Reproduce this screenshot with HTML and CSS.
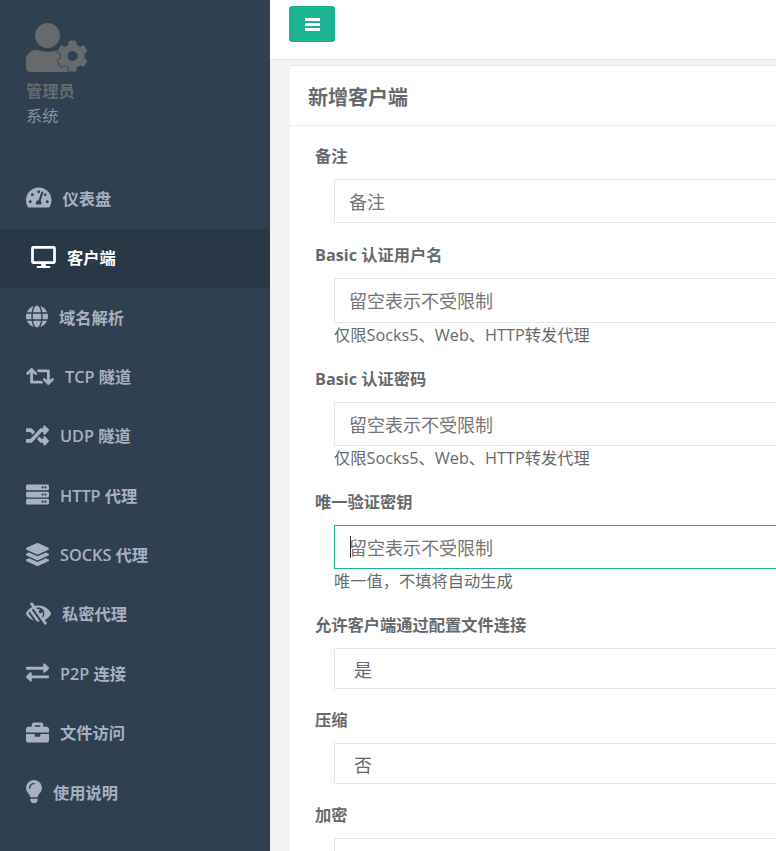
FILE: index.html
```html
<!DOCTYPE html>
<html lang="zh-CN">
<head>
<meta charset="utf-8">
<title>新增客户端</title>
<link rel="stylesheet" href="styles.css">
</head>
<body>
<div class="app">
  <aside class="sidebar">
    <div class="profile">
      <svg class="avatar" viewBox="0 0 62 49" aria-hidden="true">
        <circle cx="21.5" cy="12.5" r="12.5"/>
        <path d="M10 27h2.500c5.500 2.400 13.500 2.400 19 0H35c2 0 4 .5 5.500 1.200L48 49H5c-3 0-5-2-5-5v-7c0-5.500 4.500-10 10-10z"/>
        <svg class="avatar-gear" x="30.500" y="17" width="32" height="32" viewBox="0 0 512 512"><path d="M487.400 315.700l-42.600-24.600c4.300-23.200 4.300-47 0-70.200l42.600-24.600c4.900-2.800 7.100-8.600 5.500-14-11.100-35.600-30-67.800-54.700-94.600-3.800-4.100-10-5.100-14.800-2.300L380.800 110c-17.900-15.400-38.500-27.300-60.800-35.100V25.800c0-5.600-3.900-10.500-9.400-11.700-36.700-8.200-74.300-7.800-109.200 0-5.500 1.200-9.400 6.100-9.400 11.700V75c-22.200 7.900-42.800 19.800-60.800 35.100L88.700 85.500c-4.900-2.800-11-1.900-14.800 2.300-24.700 26.700-43.600 58.900-54.700 94.600-1.700 5.400.6 11.200 5.500 14L67.300 221c-4.300 23.200-4.300 47 0 70.200l-42.600 24.600c-4.900 2.800-7.100 8.600-5.500 14 11.100 35.600 30 67.800 54.700 94.600 3.800 4.100 10 5.100 14.800 2.300l42.600-24.600c17.900 15.400 38.500 27.300 60.800 35.100v49.200c0 5.600 3.900 10.500 9.400 11.700 36.700 8.200 74.300 7.800 109.200 0 5.500-1.200 9.400-6.100 9.400-11.700v-49.200c22.200-7.900 42.800-19.800 60.800-35.100l42.600 24.600c4.900 2.800 11 1.900 14.800-2.300 24.700-26.700 43.600-58.900 54.700-94.600 1.500-5.500-.7-11.300-5.600-14.100zM256 336c-44.100 0-80-35.900-80-80s35.900-80 80-80 80 35.900 80 80-35.900 80-80 80z"/></svg>
      </svg>
      <div class="profile-name">管理员</div>
      <div class="profile-role">系统</div>
    </div>
    <nav class="nav">
      <a class="nav-item">
        <svg class="icon" viewBox="0 0 576 512" width="25.500" height="23"><path d="M288 32C128.940 32 0 160.940 0 320c0 52.800 14.250 102.260 39.060 144.800 5.610 9.620 16.300 15.200 27.440 15.200h443c11.140 0 21.830-5.580 27.440-15.200C561.750 422.260 576 372.800 576 320c0-159.060-128.940-288-288-288zm0 64c14.710 0 26.580 10.130 30.320 23.650-1.110 2.260-2.640 4.230-3.450 6.670l-9.220 27.670c-5.130 3.490-10.970 6.010-17.640 6.010-17.670 0-32-14.330-32-32S270.330 96 288 96zM96 384c-17.670 0-32-14.330-32-32s14.330-32 32-32 32 14.330 32 32-14.330 32-32 32zm48-160c-17.670 0-32-14.330-32-32s14.330-32 32-32 32 14.330 32 32-14.330 32-32 32zm246.770-72.410l-61.330 184C343.130 347.330 352 364.540 352 384c0 11.720-3.380 22.550-8.880 32H232.880c-5.500-9.450-8.880-20.280-8.880-32 0-33.940 26.500-61.430 59.900-63.590l61.340-184.010c4.170-12.560 17.730-19.450 30.360-15.170 12.570 4.190 19.350 17.790 15.170 30.360zm14.660 57.200l15.520-46.550c3.470-1.290 7.130-2.230 11.050-2.230 17.670 0 32 14.330 32 32s-14.330 32-32 32c-11.380-.01-20.890-6.270-26.570-15.220zM480 384c-17.670 0-32-14.330-32-32s14.330-32 32-32 32 14.330 32 32-14.330 32-32 32z"/></svg>
        <span>仪表盘</span>
      </a>
      <a class="nav-item is-active">
        <svg class="icon" viewBox="0 0 576 512" width="25" height="22"><path d="M528 0H48C21.500 0 0 21.500 0 48v320c0 26.500 21.500 48 48 48h192l-16 48h-72c-13.300 0-24 10.700-24 24s10.700 24 24 24h272c13.300 0 24-10.700 24-24s-10.700-24-24-24h-72l-16-48h192c26.500 0 48-21.500 48-48V48c0-26.500-21.500-48-48-48zm-16 352H64V64h448v288z"/></svg>
        <span>客户端</span>
      </a>
      <a class="nav-item">
        <svg class="icon" viewBox="0 0 496 512" width="22" height="23"><path d="M336.500 160C322 70.700 287.800 8 248 8s-74 62.700-88.500 152h177zM152 256c0 22.200 1.200 43.500 3.300 64h185.300c2.100-20.500 3.300-41.800 3.300-64s-1.200-43.500-3.300-64H155.300c-2.100 20.500-3.300 41.800-3.300 64zm324.700-96c-28.600-67.900-86.500-120.400-158-141.600 24.400 33.800 41.200 84.700 50 141.600h108zM177.200 18.400C105.800 39.600 47.800 92.100 19.300 160h108c8.700-56.900 25.500-107.800 49.900-141.600zM487.400 192H372.700c2.100 21 3.300 42.500 3.300 64s-1.200 43-3.300 64h114.600c5.500-20.500 8.600-41.800 8.600-64s-3.100-43.500-8.500-64zM120 256c0-21.500 1.200-43 3.300-64H8.600C3.200 212.500 0 233.800 0 256s3.200 43.500 8.600 64h114.600c-2-21-3.200-42.500-3.200-64zm39.500 96c14.500 89.300 48.700 152 88.500 152s74-62.700 88.500-152h-177zm159.300 141.600c71.400-21.200 129.400-73.700 158-141.600h-108c-8.800 56.900-25.600 107.800-50 141.600zM19.300 352c28.600 67.900 86.500 120.400 158 141.600-24.400-33.800-41.200-84.700-50-141.600h-108z"/></svg>
        <span>域名解析</span>
      </a>
      <a class="nav-item">
        <svg class="icon" viewBox="0 0 640 512" width="28" height="23"><path d="M629.657 343.598L528.971 444.284c-9.373 9.372-24.568 9.372-33.941 0L394.343 343.598c-9.373-9.373-9.373-24.569 0-33.941l10.823-10.823c9.562-9.562 25.133-9.340 34.419.492L480 342.118V160H292.451a24.005 24.005 0 0 1-16.971-7.029l-16-16C244.361 121.851 255.069 96 276.451 96H520c13.255 0 24 10.745 24 24v222.118l40.416-42.792c9.285-9.831 24.856-10.054 34.419-.492l10.823 10.823c9.372 9.372 9.372 24.569-.001 33.941zm-265.138 15.431A23.999 23.999 0 0 0 347.548 352H160V169.881l40.416 42.792c9.286 9.831 24.856 10.054 34.419.491l10.822-10.822c9.373-9.373 9.373-24.569 0-33.941L144.971 67.716c-9.373-9.373-24.569-9.373-33.941 0L10.343 168.402c-9.373 9.373-9.373 24.569 0 33.941l10.822 10.822c9.562 9.562 25.133 9.340 34.419-.491L96 169.881V392c0 13.255 10.745 24 24 24h243.549c21.382 0 32.090-25.851 16.971-40.971l-16.001-16z"/></svg>
        <span>TCP 隧道</span>
      </a>
      <a class="nav-item">
        <svg class="icon" viewBox="0 0 512 512" width="23" height="23"><path d="M504.971 359.029c9.373 9.373 9.373 24.569 0 33.941l-80 79.984c-15.010 15.010-40.971 4.490-40.971-16.971V416h-58.785a12.004 12.004 0 0 1-8.773-3.812l-70.556-75.596 53.333-57.143L352 336h32v-39.981c0-21.438 25.943-31.998 40.971-16.971l80 79.981zM12 176h84l52.781 56.551 53.333-57.143-70.556-75.596A11.999 11.999 0 0 0 122.785 96H12c-6.627 0-12 5.373-12 12v56c0 6.627 5.373 12 12 12zm372 0v39.984c0 21.460 25.961 31.980 40.971 16.971l80-79.984c9.373-9.373 9.373-24.569 0-33.941l-80-79.981C409.943 24.021 384 34.582 384 56.019V96h-58.785a12.004 12.004 0 0 0-8.773 3.812L96 336H12c-6.627 0-12 5.373-12 12v56c0 6.627 5.373 12 12 12h110.785c3.326 0 6.503-1.381 8.773-3.812L352 176h32z"/></svg>
        <span>UDP 隧道</span>
      </a>
      <a class="nav-item">
        <svg class="icon" viewBox="0 0 512 512" width="23" height="23"><path d="M480 160H32c-17.673 0-32-14.327-32-32V64c0-17.673 14.327-32 32-32h448c17.673 0 32 14.327 32 32v64c0 17.673-14.327 32-32 32zm-48-88c-13.255 0-24 10.745-24 24s10.745 24 24 24 24-10.745 24-24-10.745-24-24-24zm-64 0c-13.255 0-24 10.745-24 24s10.745 24 24 24 24-10.745 24-24-10.745-24-24-24zm112 248H32c-17.673 0-32-14.327-32-32v-64c0-17.673 14.327-32 32-32h448c17.673 0 32 14.327 32 32v64c0 17.673-14.327 32-32 32zm-48-88c-13.255 0-24 10.745-24 24s10.745 24 24 24 24-10.745 24-24-10.745-24-24-24zm-64 0c-13.255 0-24 10.745-24 24s10.745 24 24 24 24-10.745 24-24-10.745-24-24-24zm112 248H32c-17.673 0-32-14.327-32-32v-64c0-17.673 14.327-32 32-32h448c17.673 0 32 14.327 32 32v64c0 17.673-14.327 32-32 32zm-48-88c-13.255 0-24 10.745-24 24s10.745 24 24 24 24-10.745 24-24-10.745-24-24-24zm-64 0c-13.255 0-24 10.745-24 24s10.745 24 24 24 24-10.745 24-24-10.745-24-24-24z"/></svg>
        <span>HTTP 代理</span>
      </a>
      <a class="nav-item">
        <svg class="icon" viewBox="0 0 512 512" width="23" height="23"><path d="M12.410 148.020l232.940 105.670c6.800 3.090 14.490 3.090 21.290 0l232.940-105.670c16.550-7.510 16.550-32.520 0-40.030L266.650 2.310a25.607 25.607 0 0 0-21.290 0L12.410 107.980c-16.550 7.510-16.550 32.530 0 40.040zm487.180 88.280l-58.090-26.330-161.640 73.270c-7.560 3.430-15.590 5.170-23.860 5.170s-16.290-1.740-23.860-5.170L70.510 209.970l-58.100 26.330c-16.550 7.500-16.550 32.500 0 40l232.940 105.590c6.800 3.080 14.490 3.080 21.290 0L499.590 276.300c16.550-7.500 16.550-32.500 0-40zm0 127.800l-57.870-26.230-161.860 73.370c-7.560 3.430-15.590 5.170-23.860 5.170s-16.290-1.740-23.860-5.170L70.290 337.870 12.410 364.100c-16.550 7.500-16.550 32.500 0 40l232.940 105.590c6.800 3.080 14.490 3.080 21.290 0L499.590 404.100c16.550-7.500 16.550-32.500 0-40z"/></svg>
        <span>SOCKS 代理</span>
      </a>
      <a class="nav-item">
        <svg class="icon" viewBox="0 0 576 512" width="25" height="23"><path d="M569.344 231.631C512.960 135.949 407.810 72 288 72c-28.468 0-56.102 3.619-82.451 10.409L152.778 10.240c-7.601-10.858-22.564-13.500-33.423-5.900l-13.114 9.178c-10.860 7.601-13.502 22.566-5.900 33.426l43.131 58.395C89.449 131.730 40.228 174.683 6.682 231.581c-.01.017-.023.033-.034.05-8.765 14.875-8.964 33.528 0 48.739 38.500 65.332 99.742 115.862 172.859 141.349L55.316 244.302A272.194 272.194 0 0 1 83.610 208.390l119.400 170.580h.01l40.630 58.040a330.055 330.055 0 0 0 78.940 1.170l-189.980-271.400a277.628 277.628 0 0 1 38.777-21.563l251.232 356.980c7.601 10.860 22.565 13.502 33.425 5.900l13.114-9.178c10.860-7.601 13.502-22.566 5.900-33.426l-43.120-58.377-.007-.01c57.161-27.978 104.835-72.040 136.810-126.301a47.938 47.938 0 0 0 .001-48.739zM390.026 345.940l-19.066-27.230c24.682-32.567 27.711-76.353 8.800-111.680v.03c0 23.650-19.170 42.820-42.820 42.820-23.828 0-42.820-19.349-42.820-42.820 0-23.650 19.170-42.820 42.820-42.820h.03c-24.750-13.249-53.522-15.643-79.510-7.680l-19.068-27.237C253.758 123.306 270.488 120 288 120c75.162 0 136 60.826 136 136 0 34.504-12.833 65.975-33.974 89.940z"/></svg>
        <span>私密代理</span>
      </a>
      <a class="nav-item">
        <svg class="icon" viewBox="0 0 512 512" width="23" height="23"><path d="M0 168v-16c0-13.255 10.745-24 24-24h360V80c0-21.367 25.899-32.042 40.971-16.971l80 80c9.372 9.373 9.372 24.569 0 33.941l-80 80C409.956 271.982 384 261.456 384 240v-48H24c-13.255 0-24-10.745-24-24zm488 152H128v-48c0-21.314-25.862-32.080-40.971-16.971l-80 80c-9.372 9.373-9.372 24.569 0 33.941l80 80C102.057 463.997 128 453.437 128 432v-48h360c13.255 0 24-10.745 24-24v-16c0-13.255-10.745-24-24-24z"/></svg>
        <span>P2P 连接</span>
      </a>
      <a class="nav-item">
        <svg class="icon" viewBox="0 0 512 512" width="23" height="23"><path d="M320 336c0 8.840-7.160 16-16 16h-96c-8.840 0-16-7.160-16-16v-48H0v144c0 25.600 22.400 48 48 48h416c25.600 0 48-22.400 48-48V288H320v48zm144-208h-80V80c0-25.600-22.400-48-48-48H176c-25.600 0-48 22.400-48 48v48H48c-25.600 0-48 22.400-48 48v80h512v-80c0-25.600-22.400-48-48-48zm-144 0H192V96h128v32z"/></svg>
        <span>文件访问</span>
      </a>
      <a class="nav-item">
        <svg class="icon" viewBox="0 0 352 512" width="16" height="23"><path d="M96.060 454.350c.01 6.290 1.870 12.450 5.360 17.690l17.090 25.690a31.990 31.990 0 0 0 26.640 14.280h61.710a31.990 31.990 0 0 0 26.640-14.280l17.090-25.690a31.989 31.989 0 0 0 5.360-17.690l.04-38.350H96.010l.05 38.350zM0 176c0 44.370 16.450 84.850 43.560 115.780 16.520 18.850 42.360 58.230 52.210 91.450.04.26.07.52.11.78h160.240c.04-.26.07-.51.11-.78 9.850-33.220 35.690-72.600 52.210-91.450C335.550 260.850 352 220.370 352 176 352 78.610 272.910-.3 175.450 0 73.440.31 0 82.970 0 176zm176-80c-44.110 0-80 35.890-80 80 0 8.840-7.160 16-16 16s-16-7.160-16-16c0-61.760 50.240-112 112-112 8.840 0 16 7.160 16 16s-7.160 16-16 16z"/></svg>
        <span>使用说明</span>
      </a>
    </nav>
  </aside>
  <main class="main">
    <header class="topbar">
      <button class="menu-btn" type="button" aria-label="菜单">
        <svg viewBox="0 0 15 13" width="15" height="13"><rect y="0" width="15" height="3" rx=".5"/><rect y="5" width="15" height="3" rx=".5"/><rect y="10" width="15" height="3" rx=".5"/></svg>
      </button>
    </header>
    <div class="content">
      <section class="card">
        <h1 class="card-title">新增客户端</h1>
        <form class="card-body">
          <div class="field">
            <label class="field-label">备注</label>
            <div class="control"><input class="input" type="text" placeholder="备注"></div>
          </div>
          <div class="field">
            <label class="field-label">Basic 认证用户名</label>
            <div class="control"><input class="input" type="text" placeholder="留空表示不受限制"><div class="help">仅限Socks5、Web、HTTP转发代理</div></div>
          </div>
          <div class="field">
            <label class="field-label">Basic 认证密码</label>
            <div class="control"><input class="input" type="text" placeholder="留空表示不受限制"><div class="help">仅限Socks5、Web、HTTP转发代理</div></div>
          </div>
          <div class="field">
            <label class="field-label">唯一验证密钥</label>
            <div class="control"><input class="input is-focus" type="text" placeholder="留空表示不受限制"><span class="caret"></span><div class="help">唯一值，不填将自动生成</div></div>
          </div>
          <div class="field">
            <label class="field-label">允许客户端通过配置文件连接</label>
            <div class="control"><select class="select"><option>是</option><option>否</option></select></div>
          </div>
          <div class="field">
            <label class="field-label">压缩</label>
            <div class="control"><select class="select"><option>否</option><option>是</option></select></div>
          </div>
          <div class="field">
            <label class="field-label">加密</label>
            <div class="control"><select class="select"><option>否</option><option>是</option></select></div>
          </div>
        </form>
      </section>
    </div>
  </main>
</div>
</body>
</html>
```
FILE: styles.css
```css
* { box-sizing: border-box; }
html, body { margin: 0; height: 100%; overflow: hidden; }
body {
  font-family: "Open Sans", "Noto Sans CJK SC", sans-serif;
  font-size: 16.250px;
  color: #676a6c;
  background: #f3f3f4;
}
.app { display: flex; width: 1300px; height: 851px; overflow: hidden; }

.sidebar { flex: 0 0 270px; background: #2f4050; }
.profile { padding: 23px 0 0 26px; height: 169.300px; }
.avatar { display: block; width: 62px; height: 49px; fill: #676a6c; overflow: visible; }
.avatar-gear { stroke: #2f4050; }
.avatar-gear path { stroke: #2f4050; stroke-width: 26px; paint-order: stroke; }
.profile-name { margin-top: 7px; line-height: 24px; font-weight: 700; color: #676a6c; }
.profile-role { line-height: 26px; color: #8095a8; }

.nav { display: flex; flex-direction: column; }
.nav-item {
  display: flex;
  align-items: center;
  gap: 11px;
  height: 59.360px;
  padding-left: 26px;
  padding-bottom: 2px;
  font-weight: 600;
  color: #a7b1c2;
}
.nav-item .icon { display: block; flex: none; fill: currentColor; }
.nav-item.is-active { padding-left: 31px; background: #293846; color: #fff; }

.main { flex: 1; min-width: 0; }
.topbar { height: 60px; background: #fff; border-bottom: 1px solid #e7eaec; padding: 6px 0 0 19px; }
.menu-btn {
  display: flex;
  align-items: center;
  justify-content: center;
  width: 46px;
  height: 36px;
  padding: 0;
  border: 0;
  border-radius: 3px;
  background: #1ab394;
}
.menu-btn svg { fill: #fff; display: block; }

.content { padding: 5px 0 0 20px; }
.card { background: #fff; border-top: 1px solid #e7eaec; }
.card-title {
  margin: 0;
  height: 60px;
  padding: 1px 0 0 18px;
  display: flex;
  align-items: center;
  font-size: 20px;
  font-weight: 700;
  color: #676a6c;
  border-bottom: 1px solid #e7eaec;
}
.card-body { padding: 20px 0 0 25px; }
.field { margin-bottom: 21.700px; }
.field-label { display: block; height: 21.800px; line-height: 21.800px; margin-bottom: 11.200px; font-weight: 700; color: #676a6c; }
.control { position: relative; margin-left: 19px; }
.input, .select {
  display: block;
  width: 100%;
  border: 1px solid #e5e6e7;
  border-radius: 0;
  background: #fff;
  outline: 0;
  font: inherit;
  font-size: 18px;
  color: #676a6c;
}
.input { height: 44.500px; padding: 2px 14px 0; }
.input::placeholder { color: #757575; opacity: 1; }
.input.is-focus { border-color: #1ab394; }
.select { height: 40.420px; padding: 3px 15px 0; }
.help { height: 24.200px; line-height: 24.200px; color: #676a6c; }
.caret { position: absolute; left: 16px; top: 11px; width: 1px; height: 22px; background: #333; }
```
